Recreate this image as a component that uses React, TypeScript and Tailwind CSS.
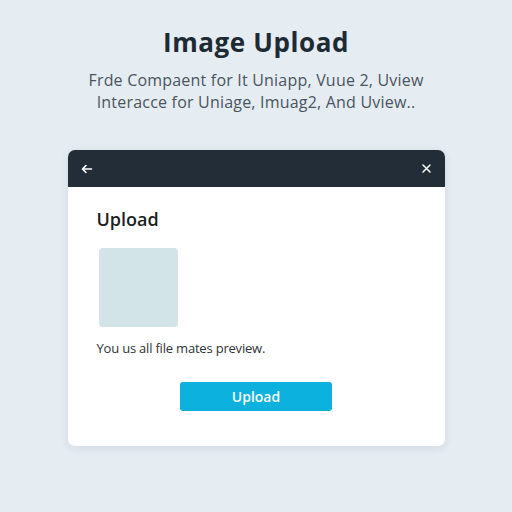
import React from "react";

export default function App() {
  return (
    <div
      className="w-[512px] h-[512px] bg-[#e5ecf2] flex flex-col items-center"
      style={{ fontFamily: "'Open Sans', 'Liberation Sans', sans-serif" }}
    >
      <h1 className="mt-[26px] text-[26px] leading-[32px] font-bold text-[#1e2a33] tracking-[0.6px]">
        Image Upload
      </h1>
      <div className="mt-[11px] text-[16px] leading-[22px] text-[#4a5560] text-center tracking-[0.2px]">
        <div>Frde Compaent for It Uniapp, Vuue 2, Uview</div>
        <div>Interacce for Uniage, Imuag2, And Uview..</div>
      </div>
      <div className="mt-[37px] w-[377px] h-[296px] bg-white rounded-[7px] shadow-[0_2px_8px_rgba(60,80,100,0.12)] overflow-hidden flex flex-col">
        <div className="h-[37px] bg-[#222d37] flex items-center justify-between px-[13px]">
          <svg width="12" height="12" viewBox="0 0 12 12" fill="none" stroke="white" strokeWidth="1.6" strokeLinecap="round" strokeLinejoin="round">
            <path d="M10.5 6H1.5M5 2.5L1.5 6L5 9.5" />
          </svg>
          <svg width="11" height="11" viewBox="0 0 11 11" fill="none" stroke="white" strokeWidth="1.5" strokeLinecap="round">
            <path d="M2 2L9 9M9 2L2 9" />
          </svg>
        </div>
        <div className="flex-1 flex flex-col px-[29px]">
          <div className="mt-[20px] text-[18px] leading-[24px] font-semibold text-[#1a1f24]">Upload</div>
          <div className="mt-[17px] ml-[2px] w-[79px] h-[79px] rounded-[4px] bg-[#d2e4e7]" />
          <div className="mt-[12px] text-[13px] leading-[18px] text-[#2e3338] tracking-[-0.2px]">You us all file mates preview.</div>
          <div className="mt-[25px] flex justify-center">
            <button className="w-[152px] h-[29px] rounded-[3px] bg-[#0cb1dd] text-white text-[14px] font-semibold">
              Upload
            </button>
          </div>
        </div>
      </div>
    </div>
  );
}
